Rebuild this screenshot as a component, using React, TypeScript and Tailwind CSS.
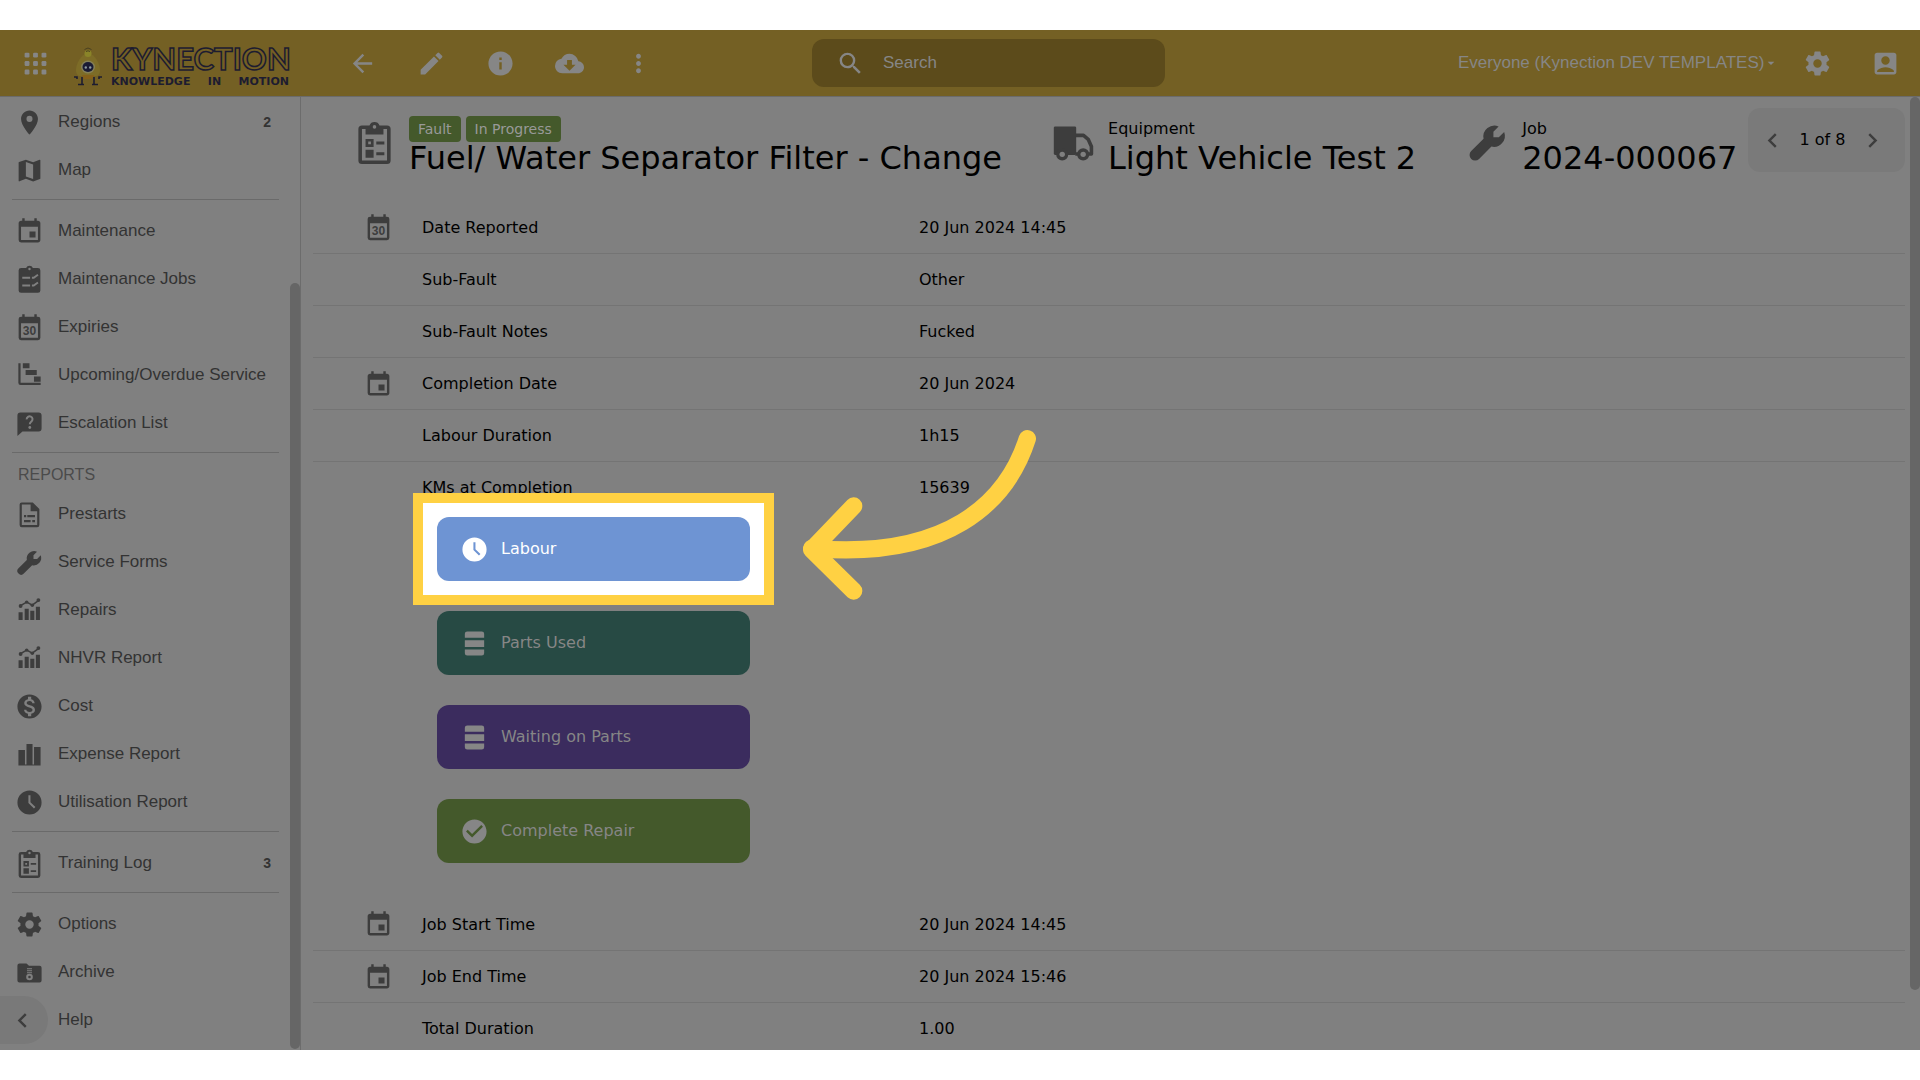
import type { ReactNode } from "react";
import {
  MdAccountBox,
  MdArrowBack,
  MdArrowDropDown,
  MdCheckCircle,
  MdChevronLeft,
  MdChevronRight,
  MdCloudDownload,
  MdEdit,
  MdEvent,
  MdInfo,
  MdMap,
  MdMonetizationOn,
  MdMoreVert,
  MdPlace,
  MdSearch,
} from "react-icons/md";

function Svg({ children, box = "0 0 24 24" }: { children: ReactNode; box?: string }) {
  return (
    <svg viewBox={box} width="1em" height="1em" fill="currentColor" aria-hidden="true">
      {children}
    </svg>
  );
}

const Apps = () => (
  <Svg>
    {[3, 10, 17].map((y) =>
      [3, 10, 17].map((x) => <rect key={`${x}-${y}`} x={x} y={y} width="4" height="4" rx="1" />),
    )}
  </Svg>
);

const Cog = () => (
  <Svg>
    <path d="M12,15.5A3.5,3.5 0 0,1 8.5,12A3.5,3.5 0 0,1 12,8.5A3.5,3.5 0 0,1 15.5,12A3.5,3.5 0 0,1 12,15.5M19.43,12.97C19.47,12.65 19.5,12.33 19.5,12C19.5,11.67 19.47,11.34 19.43,11L21.54,9.37C21.73,9.22 21.78,8.95 21.66,8.73L19.66,5.27C19.54,5.05 19.27,4.96 19.05,5.05L16.56,6.05C16.04,5.66 15.5,5.32 14.87,5.07L14.5,2.42C14.46,2.18 14.25,2 14,2H10C9.75,2 9.54,2.18 9.5,2.42L9.13,5.07C8.5,5.32 7.96,5.66 7.44,6.05L4.95,5.05C4.73,4.96 4.46,5.05 4.34,5.27L2.34,8.73C2.21,8.95 2.27,9.22 2.46,9.37L4.57,11C4.53,11.34 4.5,11.67 4.5,12C4.5,12.33 4.53,12.65 4.57,12.97L2.46,14.63C2.27,14.78 2.21,15.05 2.34,15.27L4.34,18.73C4.46,18.95 4.73,19.03 4.95,18.95L7.44,17.94C7.96,18.34 8.5,18.68 9.13,18.93L9.5,21.58C9.54,21.82 9.75,22 10,22H14C14.25,22 14.46,21.82 14.5,21.58L14.87,18.93C15.5,18.67 16.04,18.34 16.56,17.94L19.05,18.95C19.27,19.03 19.54,18.95 19.66,18.73L21.66,15.27C21.78,15.05 21.73,14.78 21.54,14.63L19.43,12.97Z" />
  </Svg>
);

const Clock = () => (
  <Svg>
    <path fillRule="evenodd" d="M12 2a10 10 0 1 0 0 20 10 10 0 0 0 0-20zM11.100 6h1.700v5.700l4.100 4.100-1.200 1.200-4.600-4.600z" />
  </Svg>
);

const Wrench = () => (
  <Svg>
    <path d="M18.200 3 15.300 6v3h3l3-2.900A6.200 6.200 0 0 1 14.200 14.300L7.300 21.200a3 3 0 0 1-4.400-4.400L9.800 9.900A6.200 6.200 0 0 1 18.200 3z" />
  </Svg>
);

const Truck = () => (
  <Svg>
    <rect x="1" y="3" width="12.5" height="16" rx="0.8" />
    <path d="M13 8h4.600l2.600 2.200 1.800 4V18.400H13" fill="none" stroke="currentColor" strokeWidth="2" strokeLinejoin="round" />
    <circle cx="5.7" cy="18.6" r="3.4" />
    <circle cx="17.4" cy="18.6" r="3.4" />
    <circle cx="5.7" cy="18.6" r="1.5" fill="#808080" />
    <circle cx="17.4" cy="18.6" r="1.5" fill="#808080" />
  </Svg>
);

const ClipboardList = () => (
  <Svg>
    <path
      fillRule="evenodd"
      d="M5 2.500h4.200a3 3 0 0 1 5.600 0H19a2 2 0 0 1 2 2V22a2 2 0 0 1-2 2H5a2 2 0 0 1-2-2V4.500a2 2 0 0 1 2-2zM5 4.500V22h14V4.500h-2V7.500H7v-3zM12 2.300a1 1 0 1 0 0 2 1 1 0 0 0 0-2z"
    />
    <path fillRule="evenodd" d="M7 10h4.500v4.500H7zM8.500 11.500v1.500h1.500v-1.500z" />
    <path d="M7 16h4.500v4.500H7zM13 11.500h4.500v1.600H13zM13 17.500h4.500v1.600H13z" />
  </Svg>
);

const ClipboardChecks = () => (
  <Svg>
    <path
      fillRule="evenodd"
      d="M5 2.500h4.200a3 3 0 0 1 5.600 0H19a2 2 0 0 1 2 2V21a2 2 0 0 1-2 2H5a2 2 0 0 1-2-2V4.500a2 2 0 0 1 2-2zM12 2.300a1 1 0 1 0 0 2 1 1 0 0 0 0-2z"
    />
    <path
      d="M6 10.500h6.500M6 17h6.500M14 10.500h1.500L19 8M14 17h1.500L19 14.500"
      fill="none"
      stroke="#808080"
      strokeWidth="1.600"
    />
  </Svg>
);

const Calendar30 = () => (
  <Svg>
    <path
      fillRule="evenodd"
      d="M6 1h2v2h8V1h2v2h1a2 2 0 0 1 2 2v15.500a2 2 0 0 1-2 2H5a2 2 0 0 1-2-2V5a2 2 0 0 1 2-2h1zM5 8.500v12h14v-12z"
    />
    <text x="12" y="18.300" textAnchor="middle" fontSize="10" fontWeight="700" fontFamily="Liberation Sans, sans-serif">
      30
    </text>
  </Svg>
);

const Gantt = () => (
  <Svg box="-1 0 26 26">
    <path d="M2 2h2v17.500h18v2H4a2 2 0 0 1-2-2zM6 2h6v4.500H6zM8.500 8H18.500v4.500H8.500zM16 14h6V18.500h-6z" />
  </Svg>
);

const CommentQuestion = () => (
  <Svg box="-2.400 -1.400 28.800 28.800">
    <path d="M3 2h18a3 3 0 0 1 3 3v13a3 3 0 0 1-3 3H5l-5 4.500V5a3 3 0 0 1 3-3z" />
    <path d="M9.200 8.900a2.900 2.900 0 1 1 4.600 2.200c-1 .8-1.500 1.200-1.500 2.700" fill="none" stroke="#808080" strokeWidth="2" />
    <circle cx="12.300" cy="17" r="1.400" fill="#808080" />
  </Svg>
);

const DocumentText = () => (
  <Svg box="-1.200 -1.200 26.400 26.400">
    <path fillRule="evenodd" d="M5 1h10l6 6v14.500a2 2 0 0 1-2 2H5a2 2 0 0 1-2-2V3a2 2 0 0 1 2-2zM5 3v18.500h14V9h-6V3z" />
    <path d="M7 12.500h2v2H7zM10 12.500h7v2h-7zM7 17h6v2H7zM14.500 17h2.500v2h-2.500z" />
  </Svg>
);

const ChartLine = () => (
  <Svg box="-2 -0.500 28.500 28.500">
    <path d="M1.500 15.500h4V23h-4zM7.500 12h4v11h-4zM13 14h4v9h-4zM18.500 10h4v13h-4z" />
    <path d="M3.500 9 9.500 5.500 15 8.500 21 4" fill="none" stroke="currentColor" strokeWidth="1.600" />
    <circle cx="3.500" cy="9.300" r="1.900" />
    <circle cx="9.500" cy="5.500" r="1.700" />
    <circle cx="15" cy="8.500" r="1.700" />
    <circle cx="21" cy="3.500" r="1.900" />
  </Svg>
);

const Bars = () => (
  <Svg box="-2.400 -2.400 28.800 28.800">
    <path d="M1 7.500h6.500V23H1zM9 1.500h6V23H9zM16.500 4.500H23V23h-6.500zM1 22h22v1H1z" />
  </Svg>
);

const FolderZip = () => (
  <Svg box="-2.400 -2.400 28.800 28.800">
    <path d="M2 3h7l2.500 2.300H22a2 2 0 0 1 2 2V20a2 2 0 0 1-2 2H2a2 2 0 0 1-2-2V5a2 2 0 0 1 2-2z" />
    <path d="M9.500 8.200h5M9.500 10.200h5M9.500 12.200h5" stroke="#808080" strokeWidth="1" />
    <circle cx="12" cy="16.500" r="2.300" fill="none" stroke="#808080" strokeWidth="2" />
  </Svg>
);

const Stack = () => (
  <Svg>
    <path d="M6 2h12a2 2 0 0 1 2 2v3.200H4V4a2 2 0 0 1 2-2zM4 9.300h16v5.600H4zM4 17h16v3a2 2 0 0 1-2 2H6a2 2 0 0 1-2-2z" />
  </Svg>
);

function Mascot() {
  return (
    <svg viewBox="0 0 30 40" className="h-10 w-[30px]" aria-hidden="true">
      <path d="M15 7C8 8 3 18 3 24c0 4 2 6 4 6h16c2 0 4-2 4-6C27 18 22 8 15 7z" fill="#7d6c27" />
      <circle cx="15" cy="7.500" r="3.500" fill="#8a8428" />
      <path d="M11.500 3.500q3.500-3 7 0M13 5.500q2-1.500 4 0" fill="none" stroke="#4a4020" />
      <ellipse cx="15" cy="21" rx="7" ry="6.500" fill="#858058" />
      <ellipse cx="15" cy="21" rx="5.500" ry="5" fill="#1a1b35" />
      <circle cx="12.800" cy="21.500" r="1.200" fill="#8c9aa0" />
      <circle cx="17.200" cy="21.500" r="1.200" fill="#8c9aa0" />
      <path d="M9 29h12l-2 4h-8z" fill="#856019" />
      <path d="M1 31h3v2M29 31h-3v2M9 31v7M5 38.500h6M21 31v7M19 38.500h6" fill="none" stroke="#1d1c30" strokeWidth="1.600" />
    </svg>
  );
}

type Item = { label: string; icon: ReactNode; count?: number };

const groups: { title?: string; items: Item[] }[] = [
  {
    items: [
      { label: "Regions", icon: <MdPlace />, count: 2 },
      { label: "Map", icon: <MdMap /> },
    ],
  },
  {
    items: [
      { label: "Maintenance", icon: <MdEvent /> },
      { label: "Maintenance Jobs", icon: <ClipboardChecks /> },
      { label: "Expiries", icon: <Calendar30 /> },
      { label: "Upcoming/Overdue Service", icon: <Gantt /> },
      { label: "Escalation List", icon: <CommentQuestion /> },
    ],
  },
  {
    title: "REPORTS",
    items: [
      { label: "Prestarts", icon: <DocumentText /> },
      { label: "Service Forms", icon: <Wrench /> },
      { label: "Repairs", icon: <ChartLine /> },
      { label: "NHVR Report", icon: <ChartLine /> },
      { label: "Cost", icon: <MdMonetizationOn /> },
      { label: "Expense Report", icon: <Bars /> },
      { label: "Utilisation Report", icon: <Clock /> },
    ],
  },
  { items: [{ label: "Training Log", icon: <ClipboardList />, count: 3 }] },
  {
    items: [
      { label: "Options", icon: <Cog /> },
      { label: "Archive", icon: <FolderZip /> },
      { label: "Help", icon: null },
    ],
  },
];

function Sidebar() {
  return (
    <aside className="relative flex w-[301px] shrink-0 border-r border-[#6c6c6c]">
      <nav className="min-w-0 flex-1 pt-px pr-[11px] pl-3">
        {groups.map((group, i) => (
          <div key={i} className={i > 0 ? "mt-[5px] border-t border-[#6a6a6a] pt-[7px]" : ""}>
            {group.title && <h2 className="h-[30px] pl-1.5 text-base leading-[30px] text-[#4b4b4b]">{group.title}</h2>}
            {group.items.map((item) => (
              <a key={item.label} href="#" className="flex h-12 items-center pr-2 pl-[3px] text-[17px] text-[#333]">
                <span className="flex w-[43px] text-[29px] text-[#3d3d3d]">{item.icon}</span>
                <span className="flex-1 whitespace-nowrap">{item.label}</span>
                {item.count && <span className="text-sm font-bold">{item.count}</span>}
              </a>
            ))}
          </div>
        ))}
      </nav>
      <div className="mt-[186px] mb-px w-2.5 rounded-full bg-[#666]" />
      <button
        aria-label="Collapse menu"
        className="absolute bottom-1.5 left-0 flex h-12 w-12 items-center rounded-r-full bg-[#797979] pl-2 text-[29px] text-[#3d3d3d]"
      >
        <MdChevronLeft />
      </button>
    </aside>
  );
}

function TopBar() {
  const tools: [string, ReactNode][] = [
    ["Back", <MdArrowBack />],
    ["Edit", <MdEdit />],
    ["Info", <MdInfo />],
    ["Download", <MdCloudDownload />],
    ["More", <MdMoreVert />],
  ];
  return (
    <header className="flex h-[67px] shrink-0 items-center border-b border-[#6b6b6b] bg-[#746024] text-[29px] text-[#868686]">
      <button aria-label="Apps" className="flex w-[70px] justify-center">
        <Apps />
      </button>
      <a href="#" aria-label="Kynection home" className="flex w-[258px] items-center gap-2 pt-1.5 pl-[3px]">
        <Mascot />
        <span className="flex w-[178px] flex-col gap-1 text-[#1d1c30]">
          <span className="font-[Lato] text-[31px] leading-7 font-bold text-[#746024] [-webkit-text-stroke:1.5px_#1d1c30]">
            KYNECTION
          </span>
          <span className="flex justify-between font-['DejaVu_Sans'] text-[11px] leading-3 font-bold">
            <span>KNOWLEDGE</span>
            <span>IN</span>
            <span>MOTION</span>
          </span>
        </span>
      </a>
      <div className="flex">
        {tools.map(([name, icon]) => (
          <button key={name} aria-label={name} className="flex w-[69px] justify-center">
            {icon}
          </button>
        ))}
      </div>
      <label className="ml-[139px] flex h-12 w-[353px] items-center rounded-xl bg-[#5c4b1b] pl-6">
        <MdSearch />
        <input
          type="search"
          aria-label="Search"
          placeholder="Search"
          className="ml-[18px] min-w-0 flex-1 bg-transparent text-[17px] outline-none placeholder:text-[#868686]"
        />
      </label>
      <div className="ml-auto flex items-center">
        <div className="relative flex items-center pr-6">
          <select aria-label="Account group" className="appearance-none bg-transparent text-[17px] text-[#868686]">
            <option>Everyone (Kynection DEV TEMPLATES)</option>
          </select>
          <MdArrowDropDown className="pointer-events-none absolute right-2.5 text-base" />
        </div>
        <button aria-label="Settings" className="flex w-14 justify-center">
          <Cog />
        </button>
        <button aria-label="Profile" className="ml-1.5 flex w-[69px] justify-center">
          <MdAccountBox />
        </button>
      </div>
    </header>
  );
}

function Heading({ icon, top, title }: { icon: ReactNode; top: ReactNode; title: string }) {
  return (
    <div className="flex gap-[13px] whitespace-nowrap">
      <span className="mt-[5px] flex text-[43px] text-[#3d3d3d]">{icon}</span>
      <div>
        <div className="flex h-[26px] items-center gap-[5px] text-base">{top}</div>
        <div className="text-[32px] leading-8">{title}</div>
      </div>
    </div>
  );
}

type Row = { label: string; value: string; icon?: ReactNode };

const topRows: Row[] = [
  { label: "Date Reported", value: "20 Jun 2024 14:45", icon: <Calendar30 /> },
  { label: "Sub-Fault", value: "Other" },
  { label: "Sub-Fault Notes", value: "Fucked" },
  { label: "Completion Date", value: "20 Jun 2024", icon: <MdEvent /> },
  { label: "Labour Duration", value: "1h15" },
  { label: "KMs at Completion", value: "15639" },
];

const bottomRows: Row[] = [
  { label: "Job Start Time", value: "20 Jun 2024 14:45", icon: <MdEvent /> },
  { label: "Job End Time", value: "20 Jun 2024 15:46", icon: <MdEvent /> },
  { label: "Total Duration", value: "1.00" },
];

function Records({ rows }: { rows: Row[] }) {
  return (
    <table className="w-full table-fixed border-collapse text-left text-base">
      <tbody>
        {rows.map((row) => (
          <tr key={row.label} className="h-[52px] border-b border-[#747474] last:border-0">
            <td className="w-[109px] pt-0.5 pl-[51px] text-[29px] text-[#3d3d3d]">{row.icon}</td>
            <th scope="row" className="w-[497px] pt-0.5 font-normal">
              {row.label}
            </th>
            <td className="pt-0.5">{row.value}</td>
          </tr>
        ))}
      </tbody>
    </table>
  );
}

const actionClass = "flex h-16 w-[313px] items-center gap-3 rounded-xl pl-[23px] text-base";

export default function App() {
  return (
    <div className="flex h-screen flex-col bg-white py-[30px] font-['Liberation_Sans',sans-serif]">
      <TopBar />
      <div className="flex min-h-0 flex-1 overflow-hidden bg-[#808080]">
        <Sidebar />
        <main className="flex min-w-0 flex-1 font-['DejaVu_Sans',sans-serif] text-black">
          <div className="min-w-0 flex-1 pr-[5px] pl-3">
            <div className="flex h-[104px] items-start pl-10">
              <div className="mt-[19px] flex gap-[50px]">
                <Heading
                  icon={<ClipboardList />}
                  title="Fuel/ Water Separator Filter - Change"
                  top={
                    <>
                      <span className="rounded bg-[#44592b] px-[9px] text-sm leading-[26px] text-[#999]">Fault</span>
                      <span className="rounded bg-[#44592b] px-[9px] text-sm leading-[26px] text-[#999]">In Progress</span>
                    </>
                  }
                />
                <Heading icon={<Truck />} title="Light Vehicle Test 2" top="Equipment" />
                <Heading icon={<Wrench />} title="2024-000067" top="Job" />
              </div>
              <div className="mt-[11px] ml-auto flex h-16 w-[157px] shrink-0 items-center justify-between rounded-xl bg-[#7a7a7a] px-2.5 text-base">
                <button aria-label="Previous" className="text-[29px] text-[#3d3d3d]">
                  <MdChevronLeft />
                </button>
                <span>1 of 8</span>
                <button aria-label="Next" className="mr-2 text-[29px] text-[#3d3d3d]">
                  <MdChevronRight />
                </button>
              </div>
            </div>
            <Records rows={topRows} />
            <div className="relative mt-1 mb-[35px] flex flex-col gap-[30px] pl-[124px]">
              <div className="relative w-fit">
                <div className="absolute -inset-6 border-10 border-[#ffd143] bg-white" />
                <button className={`${actionClass} relative bg-[#6e94d3] text-white`}>
                  <span className="text-[29px]">
                    <Clock />
                  </span>
                  Labour
                </button>
                <svg
                  viewBox="0 0 960 660"
                  className="pointer-events-none absolute -top-[117px] left-[323px] w-80 max-w-none"
                  fill="none"
                  stroke="#ffd143"
                  strokeWidth="52"
                  strokeLinecap="round"
                  strokeLinejoin="round"
                  aria-hidden="true"
                >
                  <path d="M802 116C740 310 560 480 155 445" />
                  <path d="M281 318 155 449 281 573" />
                </svg>
              </div>
              <button className={`${actionClass} bg-[#274a44] text-[#868686]`}>
                <span className="text-[29px]">
                  <Stack />
                </span>
                Parts Used
              </button>
              <button className={`${actionClass} bg-[#3b2c5e] text-[#868686]`}>
                <span className="text-[29px]">
                  <Stack />
                </span>
                Waiting on Parts
              </button>
              <button className={`${actionClass} bg-[#44592b] text-[#868686]`}>
                <span className="text-[29px]">
                  <MdCheckCircle />
                </span>
                Complete Repair
              </button>
            </div>
            <Records rows={bottomRows} />
          </div>
          <div className="mb-[60px] w-2.5 shrink-0 rounded-full bg-[#666]" />
        </main>
      </div>
    </div>
  );
}
